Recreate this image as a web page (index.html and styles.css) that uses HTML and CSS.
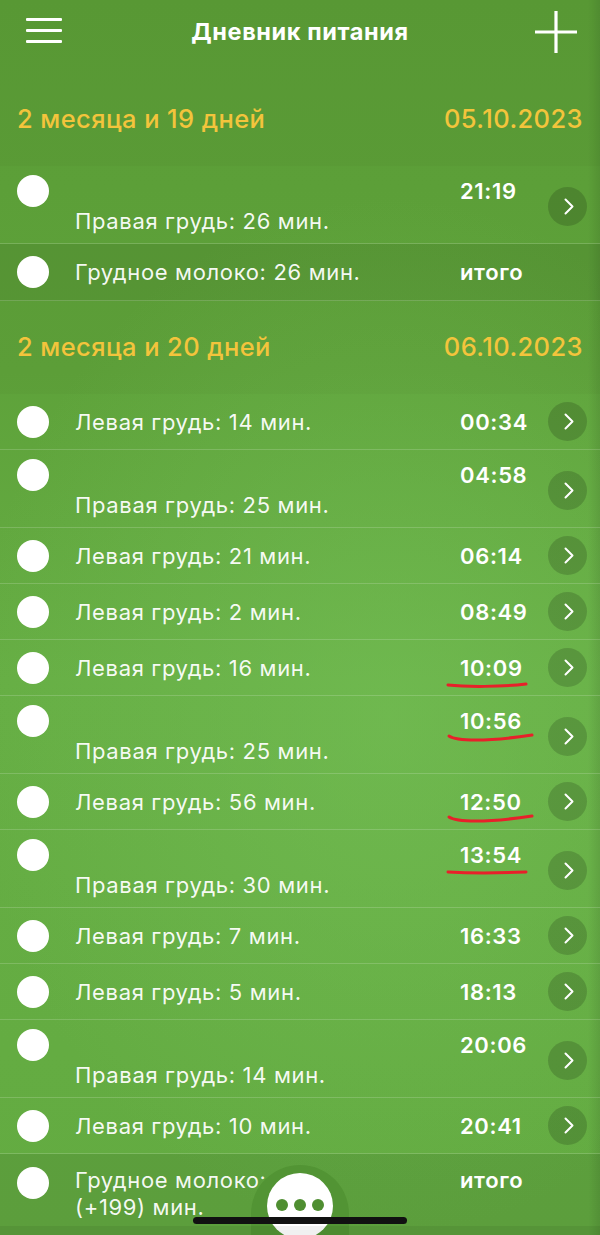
FILE: index.html
```
<!DOCTYPE html>
<html lang="ru">
<head>
<meta charset="utf-8">
<title>Дневник питания</title>
<link rel="stylesheet" href="styles.css">
</head>
<body>
<div class="screen">
  <header class="topbar">
    <span class="menu"><i></i><i></i><i></i></span>
    <h1 class="title">Дневник питания</h1>
    <svg class="plus" width="44" height="44" viewBox="0 0 44 44"><path d="M22 1V43M1 22H43" stroke="#fff" stroke-width="3.2" fill="none"/></svg>
  </header>

  <section class="day">
    <div class="day-head"><span>2 месяца и 19 дней</span><span>05.10.2023</span></div>
    <div class="row double"><span class="dot"></span><span class="time">21:19</span><span class="go"><svg width="10" height="17" viewBox="0 0 10 17"><path d="M1.5 1.5L8.5 8.5L1.5 15.5" stroke="#fff" stroke-width="2" fill="none" stroke-linecap="round" stroke-linejoin="round"/></svg></span><span class="desc">Правая грудь: 26 мин.</span></div>
    <div class="row total"><span class="dot"></span><span class="desc">Грудное молоко: 26 мин.</span><span class="time">итого</span></div>
  </section>

  <section class="day">
    <div class="day-head"><span>2 месяца и 20 дней</span><span>06.10.2023</span></div>
    <div class="row"><span class="dot"></span><span class="desc">Левая грудь: 14 мин.</span><span class="time">00:34</span><span class="go"><svg width="10" height="17" viewBox="0 0 10 17"><path d="M1.5 1.5L8.5 8.5L1.5 15.5" stroke="#fff" stroke-width="2" fill="none" stroke-linecap="round" stroke-linejoin="round"/></svg></span></div>
    <div class="row double"><span class="dot"></span><span class="time">04:58</span><span class="go"><svg width="10" height="17" viewBox="0 0 10 17"><path d="M1.5 1.5L8.5 8.5L1.5 15.5" stroke="#fff" stroke-width="2" fill="none" stroke-linecap="round" stroke-linejoin="round"/></svg></span><span class="desc">Правая грудь: 25 мин.</span></div>
    <div class="row"><span class="dot"></span><span class="desc">Левая грудь: 21 мин.</span><span class="time">06:14</span><span class="go"><svg width="10" height="17" viewBox="0 0 10 17"><path d="M1.5 1.5L8.5 8.5L1.5 15.5" stroke="#fff" stroke-width="2" fill="none" stroke-linecap="round" stroke-linejoin="round"/></svg></span></div>
    <div class="row"><span class="dot"></span><span class="desc">Левая грудь: 2 мин.</span><span class="time">08:49</span><span class="go"><svg width="10" height="17" viewBox="0 0 10 17"><path d="M1.5 1.5L8.5 8.5L1.5 15.5" stroke="#fff" stroke-width="2" fill="none" stroke-linecap="round" stroke-linejoin="round"/></svg></span></div>
    <div class="row"><span class="dot"></span><span class="desc">Левая грудь: 16 мин.</span><span class="time marked">10:09<svg class="mark" width="84" height="12" viewBox="0 0 84 12"><path d="M2 6C20 8 55 8 80 5" stroke="#e8202a" stroke-width="3" fill="none" stroke-linecap="round"/></svg></span><span class="go"><svg width="10" height="17" viewBox="0 0 10 17"><path d="M1.5 1.5L8.5 8.5L1.5 15.5" stroke="#fff" stroke-width="2" fill="none" stroke-linecap="round" stroke-linejoin="round"/></svg></span></div>
    <div class="row double"><span class="dot"></span><span class="time marked">10:56<svg class="mark" width="92" height="14" viewBox="0 0 92 14"><path d="M3 4C10 9 40 10 86 3" stroke="#e8202a" stroke-width="3" fill="none" stroke-linecap="round"/></svg></span><span class="go"><svg width="10" height="17" viewBox="0 0 10 17"><path d="M1.5 1.5L8.5 8.5L1.5 15.5" stroke="#fff" stroke-width="2" fill="none" stroke-linecap="round" stroke-linejoin="round"/></svg></span><span class="desc">Правая грудь: 25 мин.</span></div>
    <div class="row"><span class="dot"></span><span class="desc">Левая грудь: 56 мин.</span><span class="time marked">12:50<svg class="mark" width="92" height="14" viewBox="0 0 92 14"><path d="M3 4C10 9 40 10 86 3" stroke="#e8202a" stroke-width="3" fill="none" stroke-linecap="round"/></svg></span><span class="go"><svg width="10" height="17" viewBox="0 0 10 17"><path d="M1.5 1.5L8.5 8.5L1.5 15.5" stroke="#fff" stroke-width="2" fill="none" stroke-linecap="round" stroke-linejoin="round"/></svg></span></div>
    <div class="row double"><span class="dot"></span><span class="time marked">13:54<svg class="mark" width="84" height="12" viewBox="0 0 84 12"><path d="M2 6C20 7 55 7 80 6" stroke="#e8202a" stroke-width="3" fill="none" stroke-linecap="round"/></svg></span><span class="go"><svg width="10" height="17" viewBox="0 0 10 17"><path d="M1.5 1.5L8.5 8.5L1.5 15.5" stroke="#fff" stroke-width="2" fill="none" stroke-linecap="round" stroke-linejoin="round"/></svg></span><span class="desc">Правая грудь: 30 мин.</span></div>
    <div class="row"><span class="dot"></span><span class="desc">Левая грудь: 7 мин.</span><span class="time">16:33</span><span class="go"><svg width="10" height="17" viewBox="0 0 10 17"><path d="M1.5 1.5L8.5 8.5L1.5 15.5" stroke="#fff" stroke-width="2" fill="none" stroke-linecap="round" stroke-linejoin="round"/></svg></span></div>
    <div class="row"><span class="dot"></span><span class="desc">Левая грудь: 5 мин.</span><span class="time">18:13</span><span class="go"><svg width="10" height="17" viewBox="0 0 10 17"><path d="M1.5 1.5L8.5 8.5L1.5 15.5" stroke="#fff" stroke-width="2" fill="none" stroke-linecap="round" stroke-linejoin="round"/></svg></span></div>
    <div class="row double"><span class="dot"></span><span class="time">20:06</span><span class="go"><svg width="10" height="17" viewBox="0 0 10 17"><path d="M1.5 1.5L8.5 8.5L1.5 15.5" stroke="#fff" stroke-width="2" fill="none" stroke-linecap="round" stroke-linejoin="round"/></svg></span><span class="desc">Правая грудь: 14 мин.</span></div>
    <div class="row"><span class="dot"></span><span class="desc">Левая грудь: 10 мин.</span><span class="time">20:41</span><span class="go"><svg width="10" height="17" viewBox="0 0 10 17"><path d="M1.5 1.5L8.5 8.5L1.5 15.5" stroke="#fff" stroke-width="2" fill="none" stroke-linecap="round" stroke-linejoin="round"/></svg></span></div>
    <div class="row total last"><span class="dot"></span><span class="desc">Грудное молоко: 225<br>(+199) мин.</span><span class="time">итого</span></div>
  </section>

  <div class="dock">
    <span class="bump"></span>
    <span class="fab"><i></i><i></i><i></i></span>
    <span class="home"></span>
  </div>
</div>
</body>
</html>
```

FILE: styles.css
```
* { box-sizing: border-box; }

html, body {
  margin: 0;
  padding: 0;
}

body {
  width: 600px;
  height: 1235px;
  overflow: hidden;
  font-family: Inter, "Liberation Sans", Arial, sans-serif;
  color: #fff;
  background-color: #61a83f;
}

.screen {
  position: relative;
  width: 600px;
  height: 1235px;
  overflow: hidden;
  background:
    linear-gradient(to right, rgba(0,0,0,0) 588px, rgba(0,0,0,0.09) 600px),
    radial-gradient(ellipse 420px 520px at 65% 58%, rgba(120,195,90,0.5) 0%, rgba(120,195,90,0) 100%),
    linear-gradient(180deg, #5a9c36 0%, #5ea23a 30%, #66ae44 55%, #63ab41 100%);
}

/* top bar */
.topbar {
  height: 73px;
  display: flex;
  align-items: flex-start;
  justify-content: space-between;
  padding: 10px 22px 0 26px;
  background: rgba(0,0,0,0.02);
}

.menu {
  width: 36px;
  display: flex;
  flex-direction: column;
  gap: 8px;
  margin-top: 8px;
}
.menu i {
  display: block;
  height: 3px;
  background: #fff;
  border-radius: 1px;
}

.title {
  margin: 0;
  font-size: 23.5px;
  line-height: 44px;
  font-weight: 700;
  letter-spacing: 0.6px;
  margin-left: 4px;
}

.plus { display: block; }

/* day section */
.day-head {
  height: 93px;
  display: flex;
  justify-content: space-between;
  align-items: center;
  padding: 0 17px 2px 17px;
  color: #f3c43c;
  font-size: 25.5px;
  letter-spacing: 0.4px;
  font-weight: 500;
  background: rgba(0,0,0,0.02);
}

.row {
  display: grid;
  grid-template-columns: 58px 1fr 88px 39px;
  grid-template-areas: "dot desc time go";
  align-items: center;
  height: 56px;
  padding: 0 13px 0 17px;
  border-bottom: 1px solid rgba(255,255,255,0.17);
  font-size: 22px;
  letter-spacing: 0.65px;
  line-height: 26px;
}

.row.double {
  grid-template-rows: 26px 26px;
  grid-template-areas: "dot . time go" ". desc . go";
  row-gap: 4px;
  height: 78px;
  padding-top: 12px;
  padding-bottom: 9px;
  align-content: start;
}

.row.total {
  grid-template-areas: "dot desc time .";
  height: 57px;
  background: rgba(0,0,0,0.07);
}

.row.total.last {
  align-items: start;
  height: 90px;
  padding-top: 13px;
  line-height: 27px;
}

.dot {
  grid-area: dot;
  width: 32px;
  height: 32px;
  border-radius: 50%;
  background: #fff;
  justify-self: start;
}

.desc {
  grid-area: desc;
  color: rgba(255,255,255,0.94);
  white-space: nowrap;
}

.time {
  grid-area: time;
  font-weight: 600;
  position: relative;
}

.mark {
  position: absolute;
  left: -14px;
  top: 24px;
}

.go {
  grid-area: go;
  width: 39px;
  height: 39px;
  border-radius: 50%;
  background: rgba(0,0,0,0.16);
  display: flex;
  align-items: center;
  justify-content: center;
  padding-left: 2px;
}
.row.double .go { align-self: center; }
.go svg { display: block; }

/* bottom dock overlay */
.dock {
  position: absolute;
  left: 0;
  right: 0;
  bottom: 0;
  height: 75px;
  pointer-events: none;
}
.dock::after {
  content: "";
  position: absolute;
  left: 0;
  right: 0;
  bottom: 0;
  height: 9px;
  background: rgba(0,0,0,0.06);
}
.bump {
  position: absolute;
  left: 251px;
  top: 5px;
  width: 98px;
  height: 90px;
  border-radius: 49px 49px 0 0;
  background: #529434;
}
.fab {
  position: absolute;
  left: 267px;
  top: 13px;
  width: 66px;
  height: 66px;
  border-radius: 50%;
  background: #fff;
  display: flex;
  justify-content: center;
  align-items: center;
  gap: 6px;
  padding-bottom: 2px;
}
.fab i {
  display: block;
  width: 12px;
  height: 12px;
  border-radius: 50%;
  background: #4f8e31;
}
.home {
  position: absolute;
  left: 193px;
  top: 57px;
  width: 214px;
  height: 7px;
  border-radius: 4px;
  background: #111;
}
```
